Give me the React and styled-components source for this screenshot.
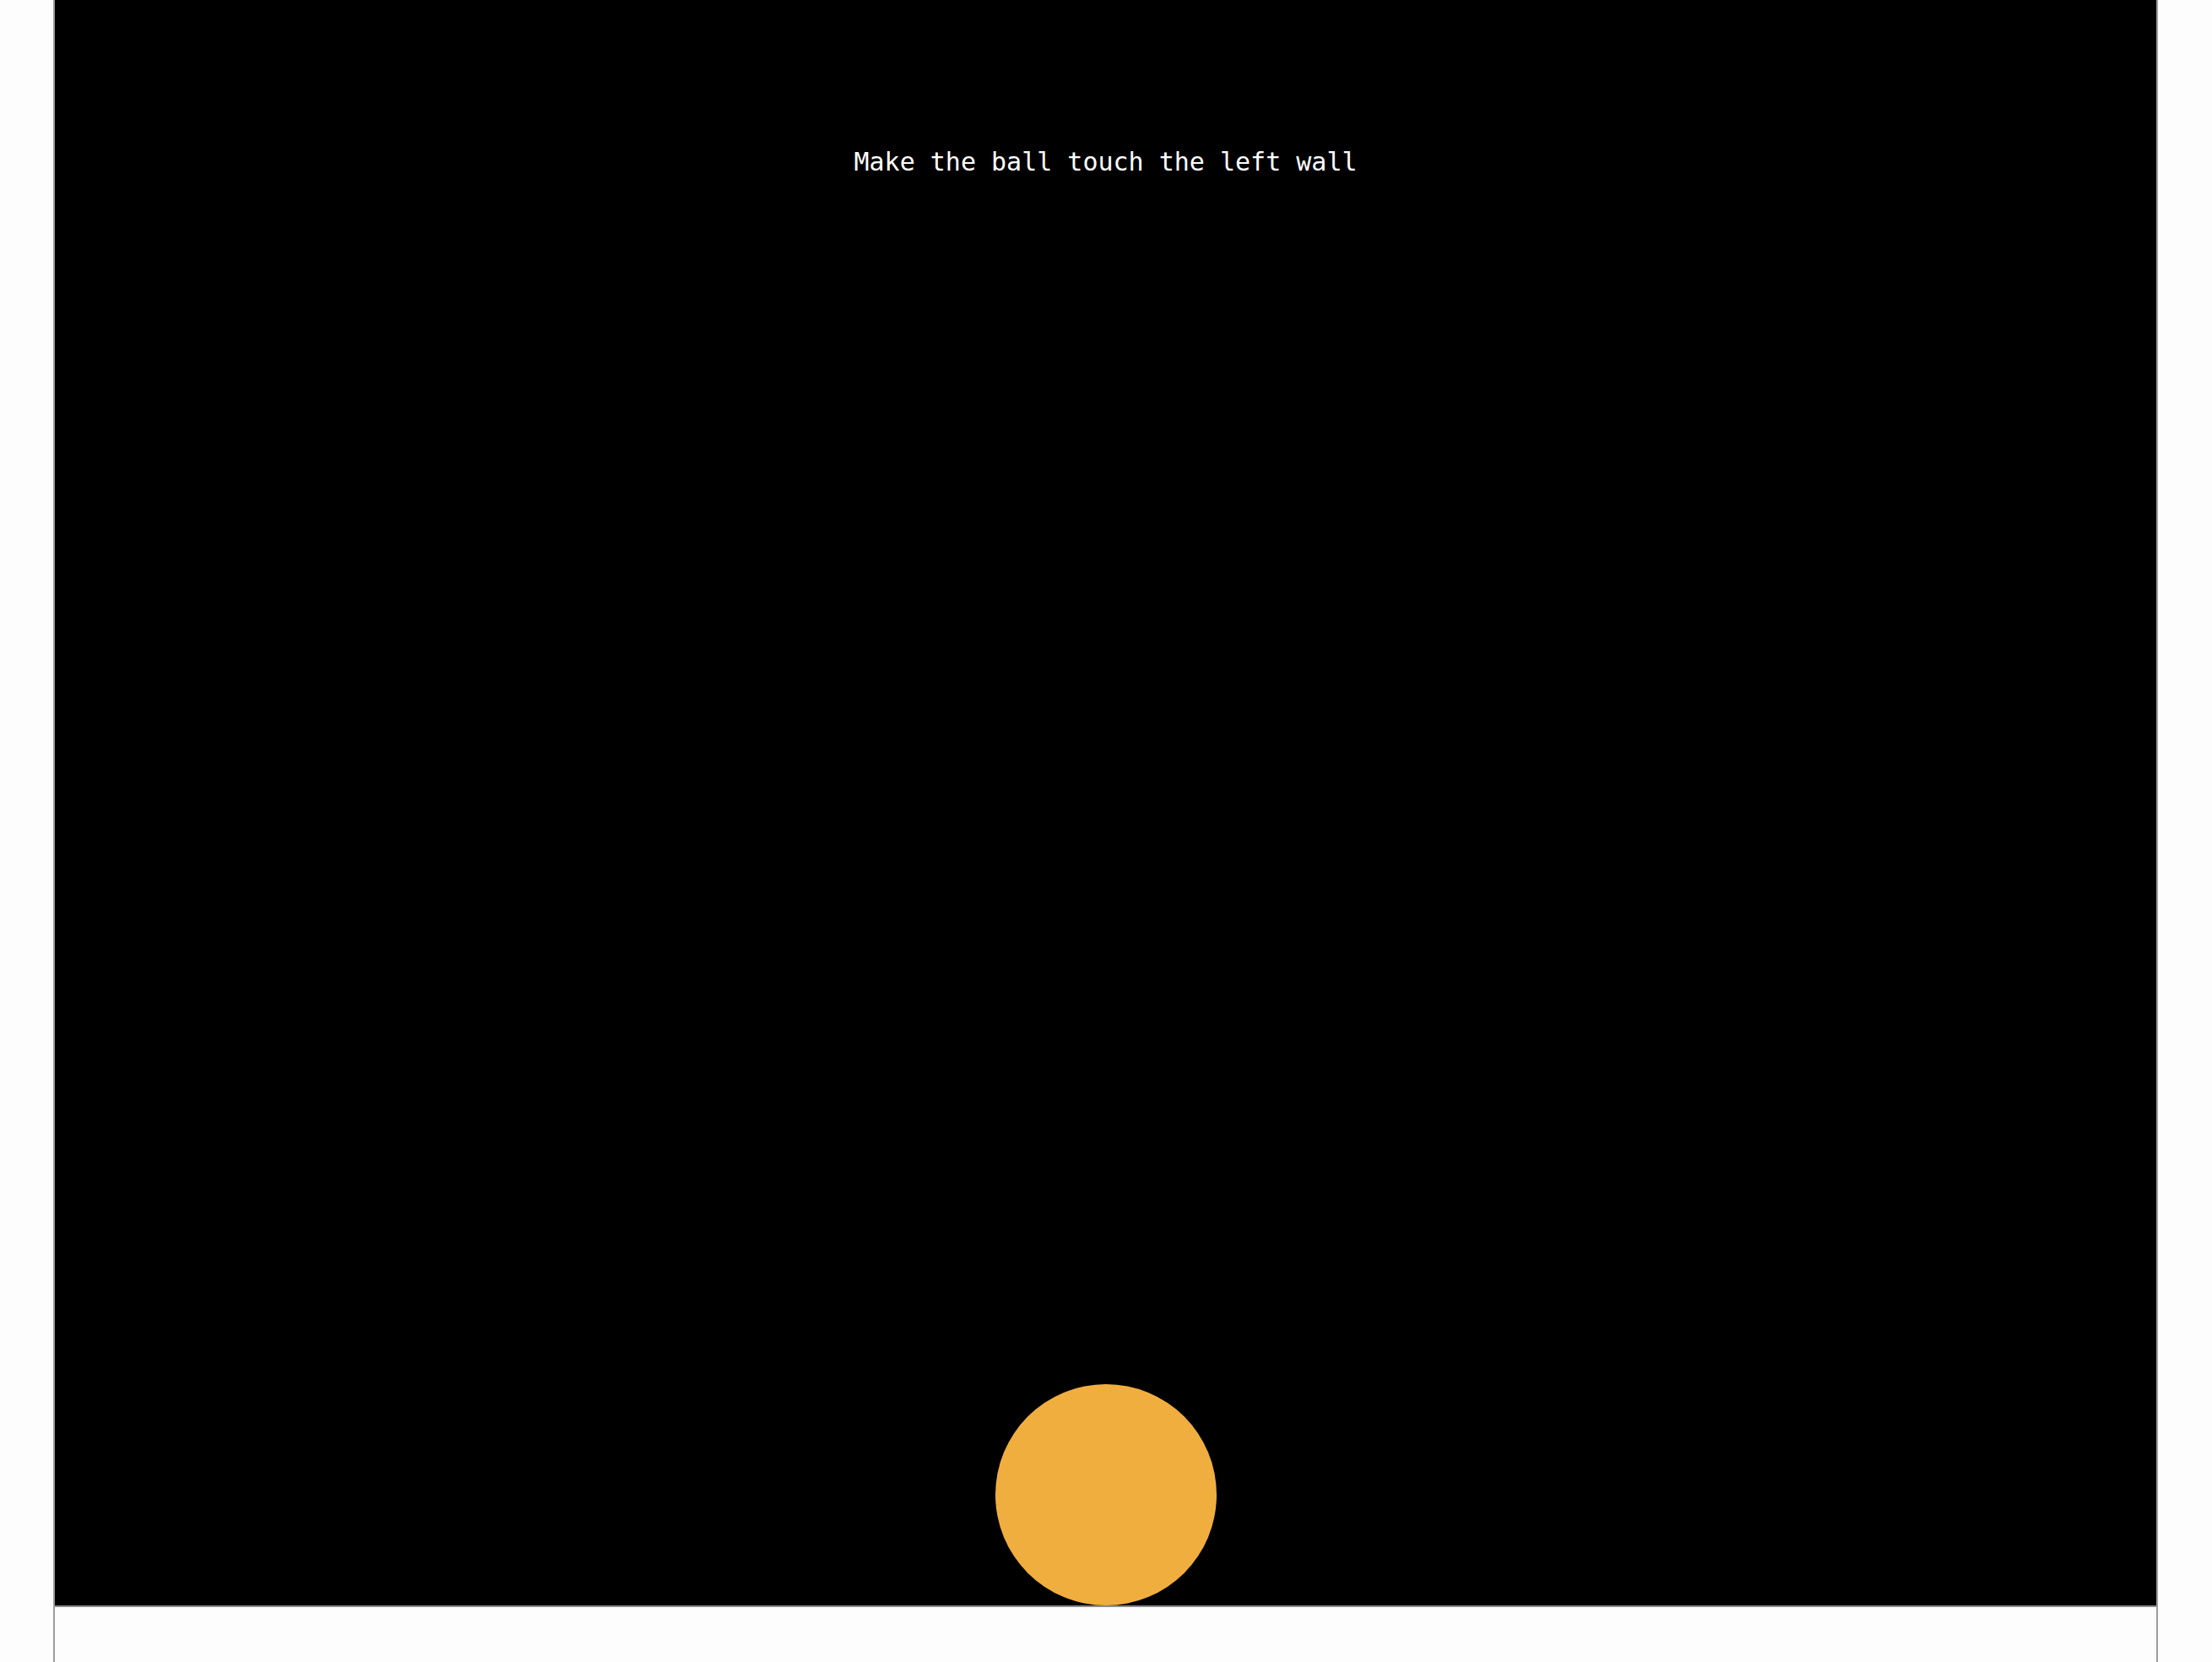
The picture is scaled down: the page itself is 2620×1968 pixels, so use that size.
import React from 'react';
import styled, { createGlobalStyle } from 'styled-components';

const GlobalStyle = createGlobalStyle`
    html, body {
        margin: 0;
        padding: 0;
        background: #fdfdfd;
    }
    * {
        box-sizing: border-box;
    }
`;

const Frame = styled.div`
    margin-left: 63px;
    width: 2493px;
    min-height: 100vh;
    border-left: 2px solid #9c9c9c;
    border-right: 2px solid #9c9c9c;
    background: #fdfdfd;
`;

const Stage = styled.div`
    display: flex;
    flex-direction: column;
    align-items: center;
    height: 1903px;
    background: #000;
    border-bottom: 2px solid #8c8c8c;
`;

const Goal = styled.p`
    margin: 174px 0 0;
    color: #fff;
    font-family: "DejaVu Sans Mono", "Liberation Mono", monospace;
    font-size: 30px;
    line-height: 35px;
    white-space: pre;
`;

const Ball = styled.div`
    margin-top: auto;
    width: ${props => props.size}px;
    height: ${props => props.size}px;
    border-radius: 50%;
    background: #f0ae3f;
`;

const App = () => {
    return (
        <>
            <GlobalStyle />
            <Frame>
                <Stage>
                    <Goal>Make the ball touch the left wall</Goal>
                    <Ball size={262} />
                </Stage>
            </Frame>
        </>
    );
};

export default App;
